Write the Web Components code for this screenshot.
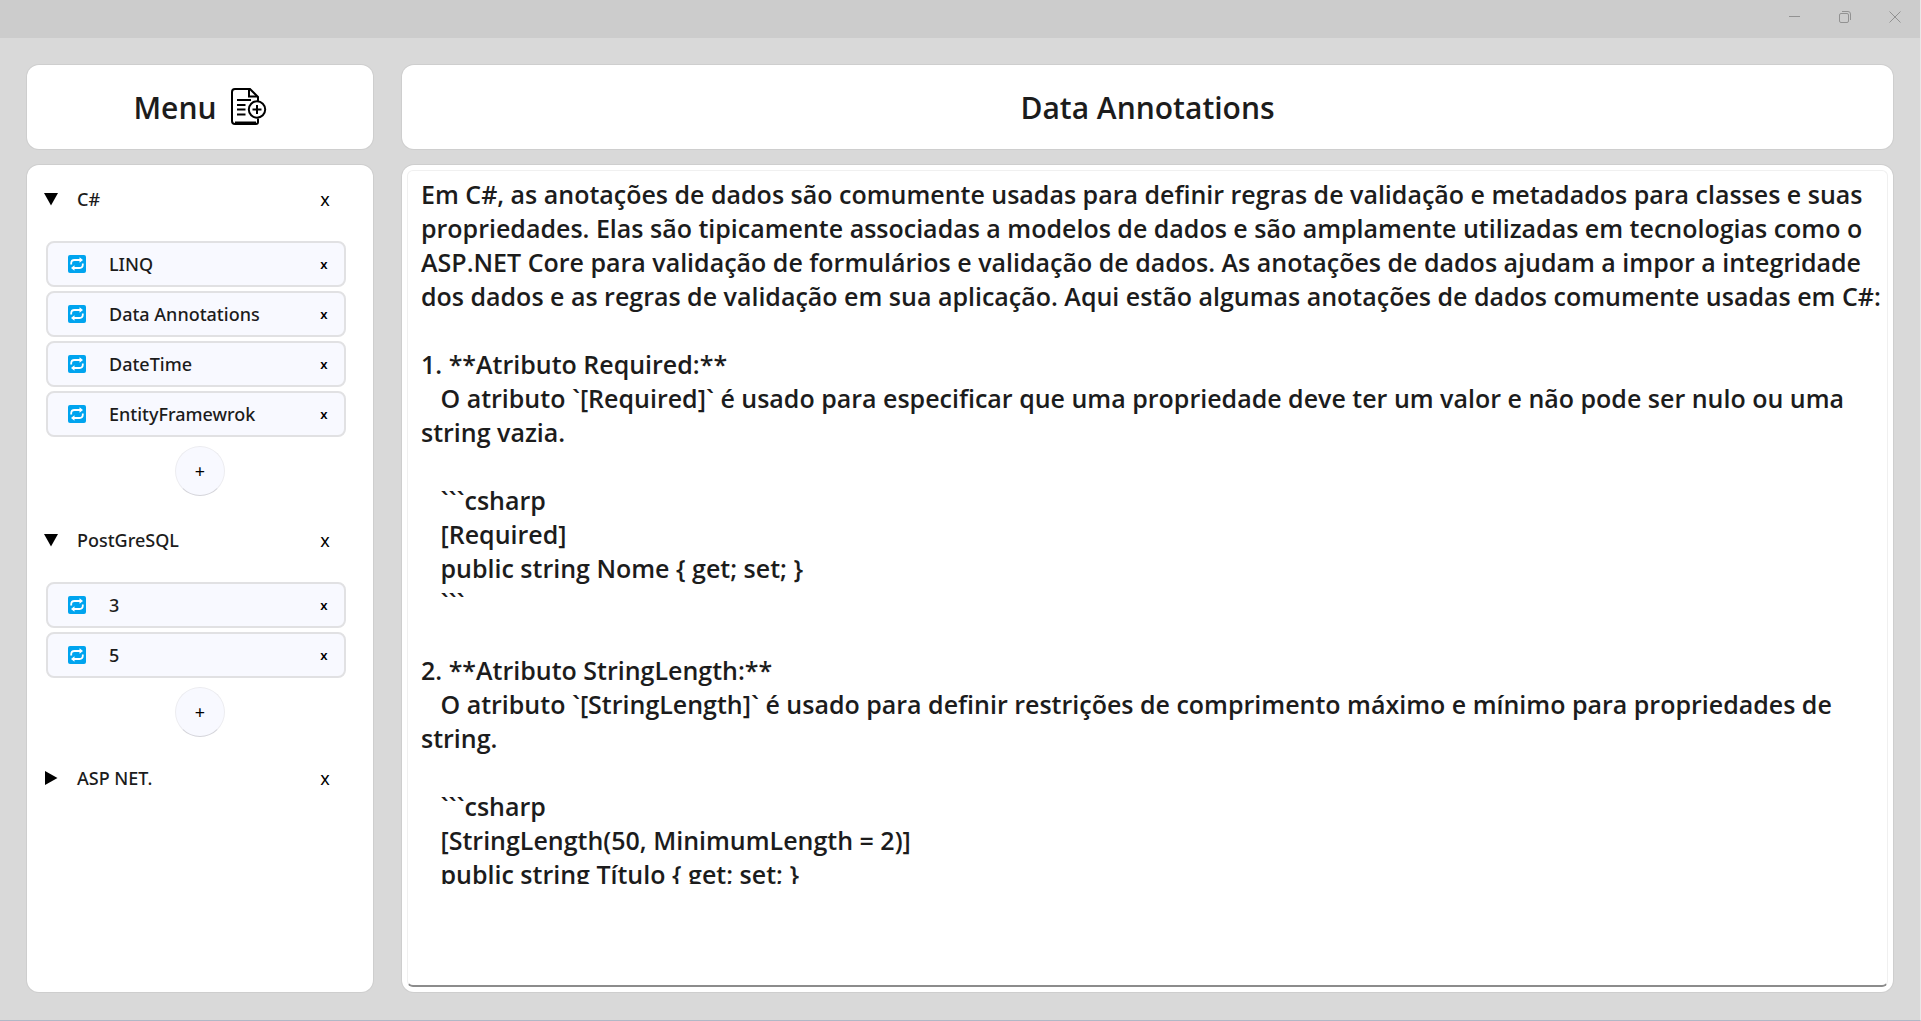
<!DOCTYPE html>
<html lang="pt-BR">
<head>
<meta charset="utf-8">
<title>Data Annotations</title>
<style>
  html, body { height: 100%; margin: 0; }
  body { font-family: "Open Sans", "Noto Sans", sans-serif; font-weight: 600; color: #1c1c1c; background: #d9d9d9; }
</style>
</head>
<body>
<notes-app></notes-app>

<template id="t-app">
  <style>
    :host { display: flex; flex-direction: column; height: 100vh; box-sizing: border-box; border-right: 1px solid #e8e8e8; border-bottom: 1px solid #b0b8c6; }
    main { flex: 1; min-height: 0; display: flex; gap: 29px; padding: 27px 27px 28px; }
    .side { flex: 0 0 346px; display: flex; flex-direction: column; gap: 16px; font-family: "Noto Sans", "Open Sans", sans-serif; font-weight: 500; }
    .content { flex: 1; min-width: 0; display: flex; flex-direction: column; gap: 16px; }
    .head { height: 84px; font-family: "Open Sans", "Noto Sans", sans-serif; }
    .fill { flex: 1; min-height: 0; }
    .bar { display: flex; align-items: center; justify-content: center; gap: 14px; height: 100%; }
    h1, h2 { margin: 0; padding-top: 2px; font-size: 30px; line-height: 42px; font-weight: 600; }
    .new { display: flex; padding: 0; border: 0; background: none; }
    nav { display: flex; flex-direction: column; gap: 21px; padding: 11px 27px 0 19px; }
  </style>
  <window-bar></window-bar>
  <main>
    <div class="side">
      <rounded-card class="head">
        <div class="bar">
          <h2>Menu</h2>
          <button class="new" aria-label="Novo grupo">
            <svg width="36" height="38" viewBox="0 0 36 38" fill="none" stroke="#000" stroke-width="2">
              <path d="M27 30.500V34Q27 36 25 36H4Q1 36 1 33V4Q1 1 4 1H19L27 9V13"/>
              <path d="M18 1.500V8.500H26"/>
              <path d="M6 12H20M6 17H14.500M6 21.500H14.500M6 26.500H14.500"/>
              <path d="M4 35H25" stroke-width="3"/>
              <circle cx="26" cy="21.500" r="8.200"/>
              <path d="M21.500 21.500H30.500M26 17V26"/>
            </svg>
          </button>
        </div>
      </rounded-card>
      <rounded-card class="fill">
        <nav>
          <menu-group label="C#" open>
            <menu-item>LINQ</menu-item>
            <menu-item>Data Annotations</menu-item>
            <menu-item>DateTime</menu-item>
            <menu-item>EntityFramewrok</menu-item>
          </menu-group>
          <menu-group label="PostGreSQL" open>
            <menu-item>3</menu-item>
            <menu-item>5</menu-item>
          </menu-group>
          <menu-group label="ASP NET."></menu-group>
        </nav>
      </rounded-card>
    </div>
    <div class="content">
      <rounded-card class="head"><div class="bar"><h1>Data Annotations</h1></div></rounded-card>
      <rounded-card class="fill"><note-editor></note-editor></rounded-card>
    </div>
  </main>
</template>

<template id="t-bar">
  <style>
    :host { display: flex; justify-content: flex-end; align-items: center; height: 38px; padding-bottom: 5px; box-sizing: border-box; background: #ccc; }
    button { display: flex; justify-content: center; width: 50px; padding: 0; border: 0; background: none; color: #929292; }
  </style>
  <button aria-label="Minimizar"><svg width="12" height="12" fill="none" stroke="currentColor"><path d="M0 5.500H11"/></svg></button>
  <button aria-label="Restaurar"><svg width="12" height="12" fill="none" stroke="currentColor"><rect x=".5" y="2.500" width="9" height="9" rx="1.500"/><path d="M3 .5H9Q11.500 .5 11.500 3V9"/></svg></button>
  <button aria-label="Fechar"><svg width="12" height="12" fill="none" stroke="currentColor"><path d="M.5 .5L11.500 11.500M11.500 .5L.5 11.500"/></svg></button>
</template>

<template id="t-card">
  <style>
    :host { display: block; box-sizing: border-box; background: #fff; border-radius: 12px; box-shadow: 0 0 0 1px #cecece; }
  </style>
  <slot></slot>
</template>

<template id="t-group">
  <style>
    :host { display: block; }
    .row { display: flex; align-items: center; height: 46px; }
    :host(:not([open])) .row { height: 40px; }
    button { font: inherit; color: inherit; border: 0; padding: 0; background: none; }
    .toggle { flex: 1; display: flex; align-items: center; font-size: 18px; line-height: 24px; text-align: left; }
    .arrow { width: 14px; height: 14px; margin: 0 19px 0 -2px; }
    .arrow.down { transform: rotate(90deg); }
    .del { width: 30px; height: 30px; margin-right: 6px; font-size: 18px; line-height: 24px; font-weight: 400; color: #000; }
    .body { display: flex; flex-direction: column; gap: 4px; padding-top: 19px; }
    .body[hidden] { display: none; }
    .add { width: 50px; height: 50px; margin: 5px 0 0 129px; border: 1px solid #ececf0; border-bottom-color: #d4d4da; border-radius: 50%; background: #f8f9ff; font-size: 18px; font-weight: 400; color: #000; }
  </style>
  <div class="row">
    <button class="toggle">
      <svg class="arrow" viewBox="0 0 14 14"><path d="M1 0L13.500 7L1 14Z"/></svg>
      <span></span>
    </button>
    <button class="del">x</button>
  </div>
  <div class="body"><slot></slot><button class="add">+</button></div>
</template>

<template id="t-item">
  <style>
    :host { display: flex; align-items: center; height: 46px; box-sizing: border-box; border: 2px solid #e1e1e3; border-radius: 8px; background: #f8f9ff; padding: 0 8px 0 20px; }
    button { font: inherit; color: inherit; border: 0; padding: 0; background: none; }
    .swap { display: flex; }
    .open { flex: 1; padding-left: 23px; font-size: 18px; line-height: 24px; text-align: left; }
    .del { width: 24px; height: 30px; font-size: 13px; font-weight: 600; color: #000; }
  </style>
  <button class="swap" aria-label="Renomear">
    <svg width="18" height="18" viewBox="0 0 18 18" fill="none">
      <rect width="18" height="18" rx="2" fill="#00a4ef"/>
      <path d="M3.200 9.500V8.500Q3.200 5 6.500 5H12M14.800 8.500V9.500Q14.800 13 11.500 13H6" stroke="#fff" stroke-width="1.800"/>
      <path d="M11.500 2.300L15 5L11.500 7.700ZM6.500 10.300L3 13L6.500 15.700Z" fill="#fff"/>
    </svg>
  </button>
  <button class="open"><slot></slot></button>
  <button class="del">x</button>
</template>

<template id="t-editor">
  <style>
    :host { display: block; height: 100%; box-sizing: border-box; padding: 5px; }
    .frame { height: 100%; box-sizing: border-box; border: 1px solid #f0f0f0; border-bottom: 2px solid #8c8c8c; border-radius: 6px; padding: 6px 0 101px 13px; }
    textarea { display: block; width: 100%; height: 100%; box-sizing: border-box; margin: 0; padding: 0; border: 0; outline: 0; resize: none; overflow: hidden; background: none; font: inherit; font-size: 25px; line-height: 34px; color: inherit; white-space: pre-wrap; }
  </style>
  <div class="frame"><textarea aria-label="Texto da nota" spellcheck="false">
Em C#, as anotações de dados são comumente usadas para definir regras de validação e metadados para classes e suas propriedades. Elas são tipicamente associadas a modelos de dados e são amplamente utilizadas em tecnologias como o ASP.NET Core para validação de formulários e validação de dados. As anotações de dados ajudam a impor a integridade dos dados e as regras de validação em sua aplicação. Aqui estão algumas anotações de dados comumente usadas em C#:

1. **Atributo Required:**
   O atributo `[Required]` é usado para especificar que uma propriedade deve ter um valor e não pode ser nulo ou uma string vazia.

   ```csharp
   [Required]
   public string Nome { get; set; }
   ```

2. **Atributo StringLength:**
   O atributo `[StringLength]` é usado para definir restrições de comprimento máximo e mínimo para propriedades de string.

   ```csharp
   [StringLength(50, MinimumLength = 2)]
   public string Título { get; set; }</textarea></div>
</template>

<script>
  class TemplateElement extends HTMLElement {
    constructor() {
      super();
      const t = document.getElementById(this.constructor.template);
      this.attachShadow({ mode: "open" }).append(t.content.cloneNode(true));
    }
  }
  customElements.define("window-bar", class extends TemplateElement { static template = "t-bar"; });
  customElements.define("rounded-card", class extends TemplateElement { static template = "t-card"; });
  customElements.define("note-editor", class extends TemplateElement { static template = "t-editor"; });
  customElements.define("menu-item", class extends TemplateElement {
    static template = "t-item";
    connectedCallback() {
      this.shadowRoot.querySelector(".del").addEventListener("click", () => this.remove());
    }
  });
  customElements.define("menu-group", class extends TemplateElement {
    static template = "t-group";
    static observedAttributes = ["label", "open"];
    connectedCallback() {
      this.shadowRoot.querySelector(".toggle").addEventListener("click", () => this.toggleAttribute("open"));
      this.shadowRoot.querySelector(".del").addEventListener("click", () => this.remove());
      this.update();
    }
    attributeChangedCallback() { this.update(); }
    update() {
      const root = this.shadowRoot, open = this.hasAttribute("open");
      root.querySelector(".toggle span").textContent = this.getAttribute("label");
      root.querySelector(".toggle").setAttribute("aria-expanded", open);
      root.querySelector(".arrow").classList.toggle("down", open);
      root.querySelector(".body").hidden = !open;
    }
  });
  customElements.define("notes-app", class extends TemplateElement { static template = "t-app"; });
</script>
</body>
</html>
